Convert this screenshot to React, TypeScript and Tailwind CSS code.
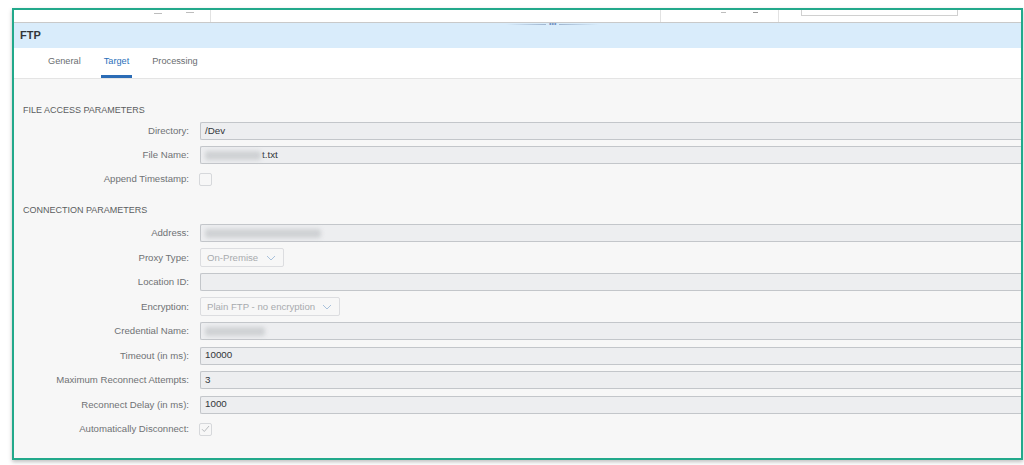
import React from 'react'

const FONT = { fontFamily: '"Liberation Sans", Arial, sans-serif' }

const TABS = ["General", "Target", "Processing"]

function Label({ children }: { children: React.ReactNode }) {
  return (
    <div className="w-[176px] shrink-0 pr-[1px] text-right text-[9.6px] text-[#6f7275]">
      {children}
    </div>
  )
}

function TextRow({ label, value, blurred, h }: { label: string; value?: string; blurred?: number; h: string }) {
  return (
    <div className={`flex items-center gap-[10px] ${h}`}>
      <Label>{label}</Label>
      <div className="flex h-[18px] flex-1 items-center rounded-l-[2px] border border-r-0 border-[#c3c6ca] bg-[#edeef0] px-[4px] text-[9.8px] text-[#32363a]">
        {blurred ? (
          <span className="mr-[1px] inline-block h-[9px] rounded-[3px] bg-[#cfd1d4] blur-[2px]" style={{ width: blurred }} />
        ) : null}
        {value}
      </div>
    </div>
  )
}

function Select({ label, value, w, h }: { label: string; value: string; w: string; h: string }) {
  return (
    <div className={`flex items-center gap-[10px] ${h}`}>
      <Label>{label}</Label>
      <div className={`flex h-[19px] items-center justify-between rounded-[2px] border border-[#dcdde0] bg-[#f7f7f7] pl-[6px] pr-[7px] text-[9.6px] text-[#a8abae] ${w}`}>
        <span>{value}</span>
        <svg width="10" height="6" viewBox="0 0 10 6" fill="none">
          <path d="M1 1l4 4 4-4" stroke="#a9c2dc" strokeWidth="1" />
        </svg>
      </div>
    </div>
  )
}

function Check({ label, checked, h }: { label: string; checked?: boolean; h: string }) {
  return (
    <div className={`flex items-center gap-[9px] ${h}`}>
      <Label>{label}</Label>
      <div className="flex size-[13px] items-center justify-center rounded-[2px] border border-[#d6d8db] bg-[#f7f7f7]">
        {checked ? (
          <svg width="9" height="8" viewBox="0 0 9 8" fill="none">
            <path d="M1 4.2l2.3 2.3L8 1" stroke="#b8bbbe" strokeWidth="1" />
          </svg>
        ) : null}
      </div>
    </div>
  )
}

function Heading({ children, cls }: { children: React.ReactNode; cls: string }) {
  return (
    <div className={`h-[16px] pl-[9px] text-[9px] leading-[16px] text-[#5b5e61] ${cls}`}>
      {children}
    </div>
  )
}

export default function App() {
  return (
    <div className="h-[465px] w-[1024px] overflow-hidden bg-white pl-[12px] pt-[8px]" style={FONT}>
      <div className="relative flex h-[452px] w-[1011px] flex-col overflow-hidden border-2 border-[#22a98b] bg-[#f7f7f7] shadow-[0_2px_4px_rgba(0,0,0,0.25)]">

        {/* leftover toolbar strip from the view above */}
        <div className="flex h-[13px] shrink-0 border-b border-[#c9c9c9] bg-white shadow-[0_1px_1px_rgba(0,0,0,0.12)]">
          <div className="relative w-[197px] border-r border-[#e2e2e2]">
            <span className="absolute left-[140px] top-[3px] h-[1px] w-[8px] bg-[#bdbdbd]" />
            <span className="absolute left-[172px] top-[2px] h-[1px] w-[8px] bg-[#bdbdbd]" />
          </div>
          <div className="w-[450px] border-r border-[#e2e2e2]" />
          <div className="relative w-[118px] border-r border-[#e2e2e2]">
            <span className="absolute left-[60px] top-[2px] h-[1px] w-[5px] bg-[#bdbdbd]" />
            <span className="absolute left-[92px] top-[2px] h-[1px] w-[5px] bg-[#9a9a9a]" />
          </div>
          <div className="pl-[22px]">
            <div className="h-[6px] w-[157px] border border-t-0 border-[#d0d0d0]" />
          </div>
        </div>

        {/* drag handle over the header */}
        <div className="absolute left-[492px] top-[12px] flex items-center gap-[3px]">
          <span className="h-[1px] w-[40px] bg-gradient-to-r from-transparent to-[#9fb5cf]" />
          <span className="text-[7px] leading-[4px] text-[#6f8fbf]">•••</span>
          <span className="h-[1px] w-[40px] bg-gradient-to-l from-transparent to-[#9fb5cf]" />
        </div>

        {/* header */}
        <div className="flex h-[25px] shrink-0 items-center bg-[#d9ecfb] pl-[6px] text-[11px] font-bold text-[#32363a]">
          FTP
        </div>

        {/* tabs */}
        <div className="flex h-[31px] shrink-0 items-stretch gap-[23px] border-b border-[#e4e4e4] bg-white pl-[34px]">
          {TABS.map((t) => (
            <div
              key={t}
              className={`flex items-center border-b-[3px] pt-[1px] text-[9.2px] ${
                t === "Target" ? "-mx-[3px] border-[#2b6cb6] px-[3px] text-[#2a6fba]" : "border-transparent text-[#6a6d70]"
              }`}
            >
              {t}
            </div>
          ))}
        </div>

        {/* form */}
        <div className="flex flex-col pt-[23px]">
          <Heading cls="mb-[1px]">FILE ACCESS PARAMETERS</Heading>
          <TextRow label="Directory:" value="/Dev" h="h-[24px]" />
          <TextRow label="File Name:" value="t.txt" blurred={56} h="h-[24px]" />
          <Check label="Append Timestamp:" h="h-[25px]" />

          <Heading cls="mt-[10px] mb-[3px]">CONNECTION PARAMETERS</Heading>
          <TextRow label="Address:" blurred={116} h="h-[24.5px]" />
          <Select label="Proxy Type:" value="On-Premise" w="w-[84px]" h="h-[24.5px]" />
          <TextRow label="Location ID:" h="h-[24.5px]" />
          <Select label="Encryption:" value="Plain FTP - no encryption" w="w-[140px]" h="h-[24.5px]" />
          <TextRow label="Credential Name:" blurred={60} h="h-[24.5px]" />
          <TextRow label="Timeout (in ms):" value="10000" h="h-[24.5px]" />
          <TextRow label="Maximum Reconnect Attempts:" value="3" h="h-[24.5px]" />
          <TextRow label="Reconnect Delay (in ms):" value="1000" h="h-[24.5px]" />
          <Check label="Automatically Disconnect:" checked h="h-[24.5px]" />
        </div>
      </div>
    </div>
  )
}
